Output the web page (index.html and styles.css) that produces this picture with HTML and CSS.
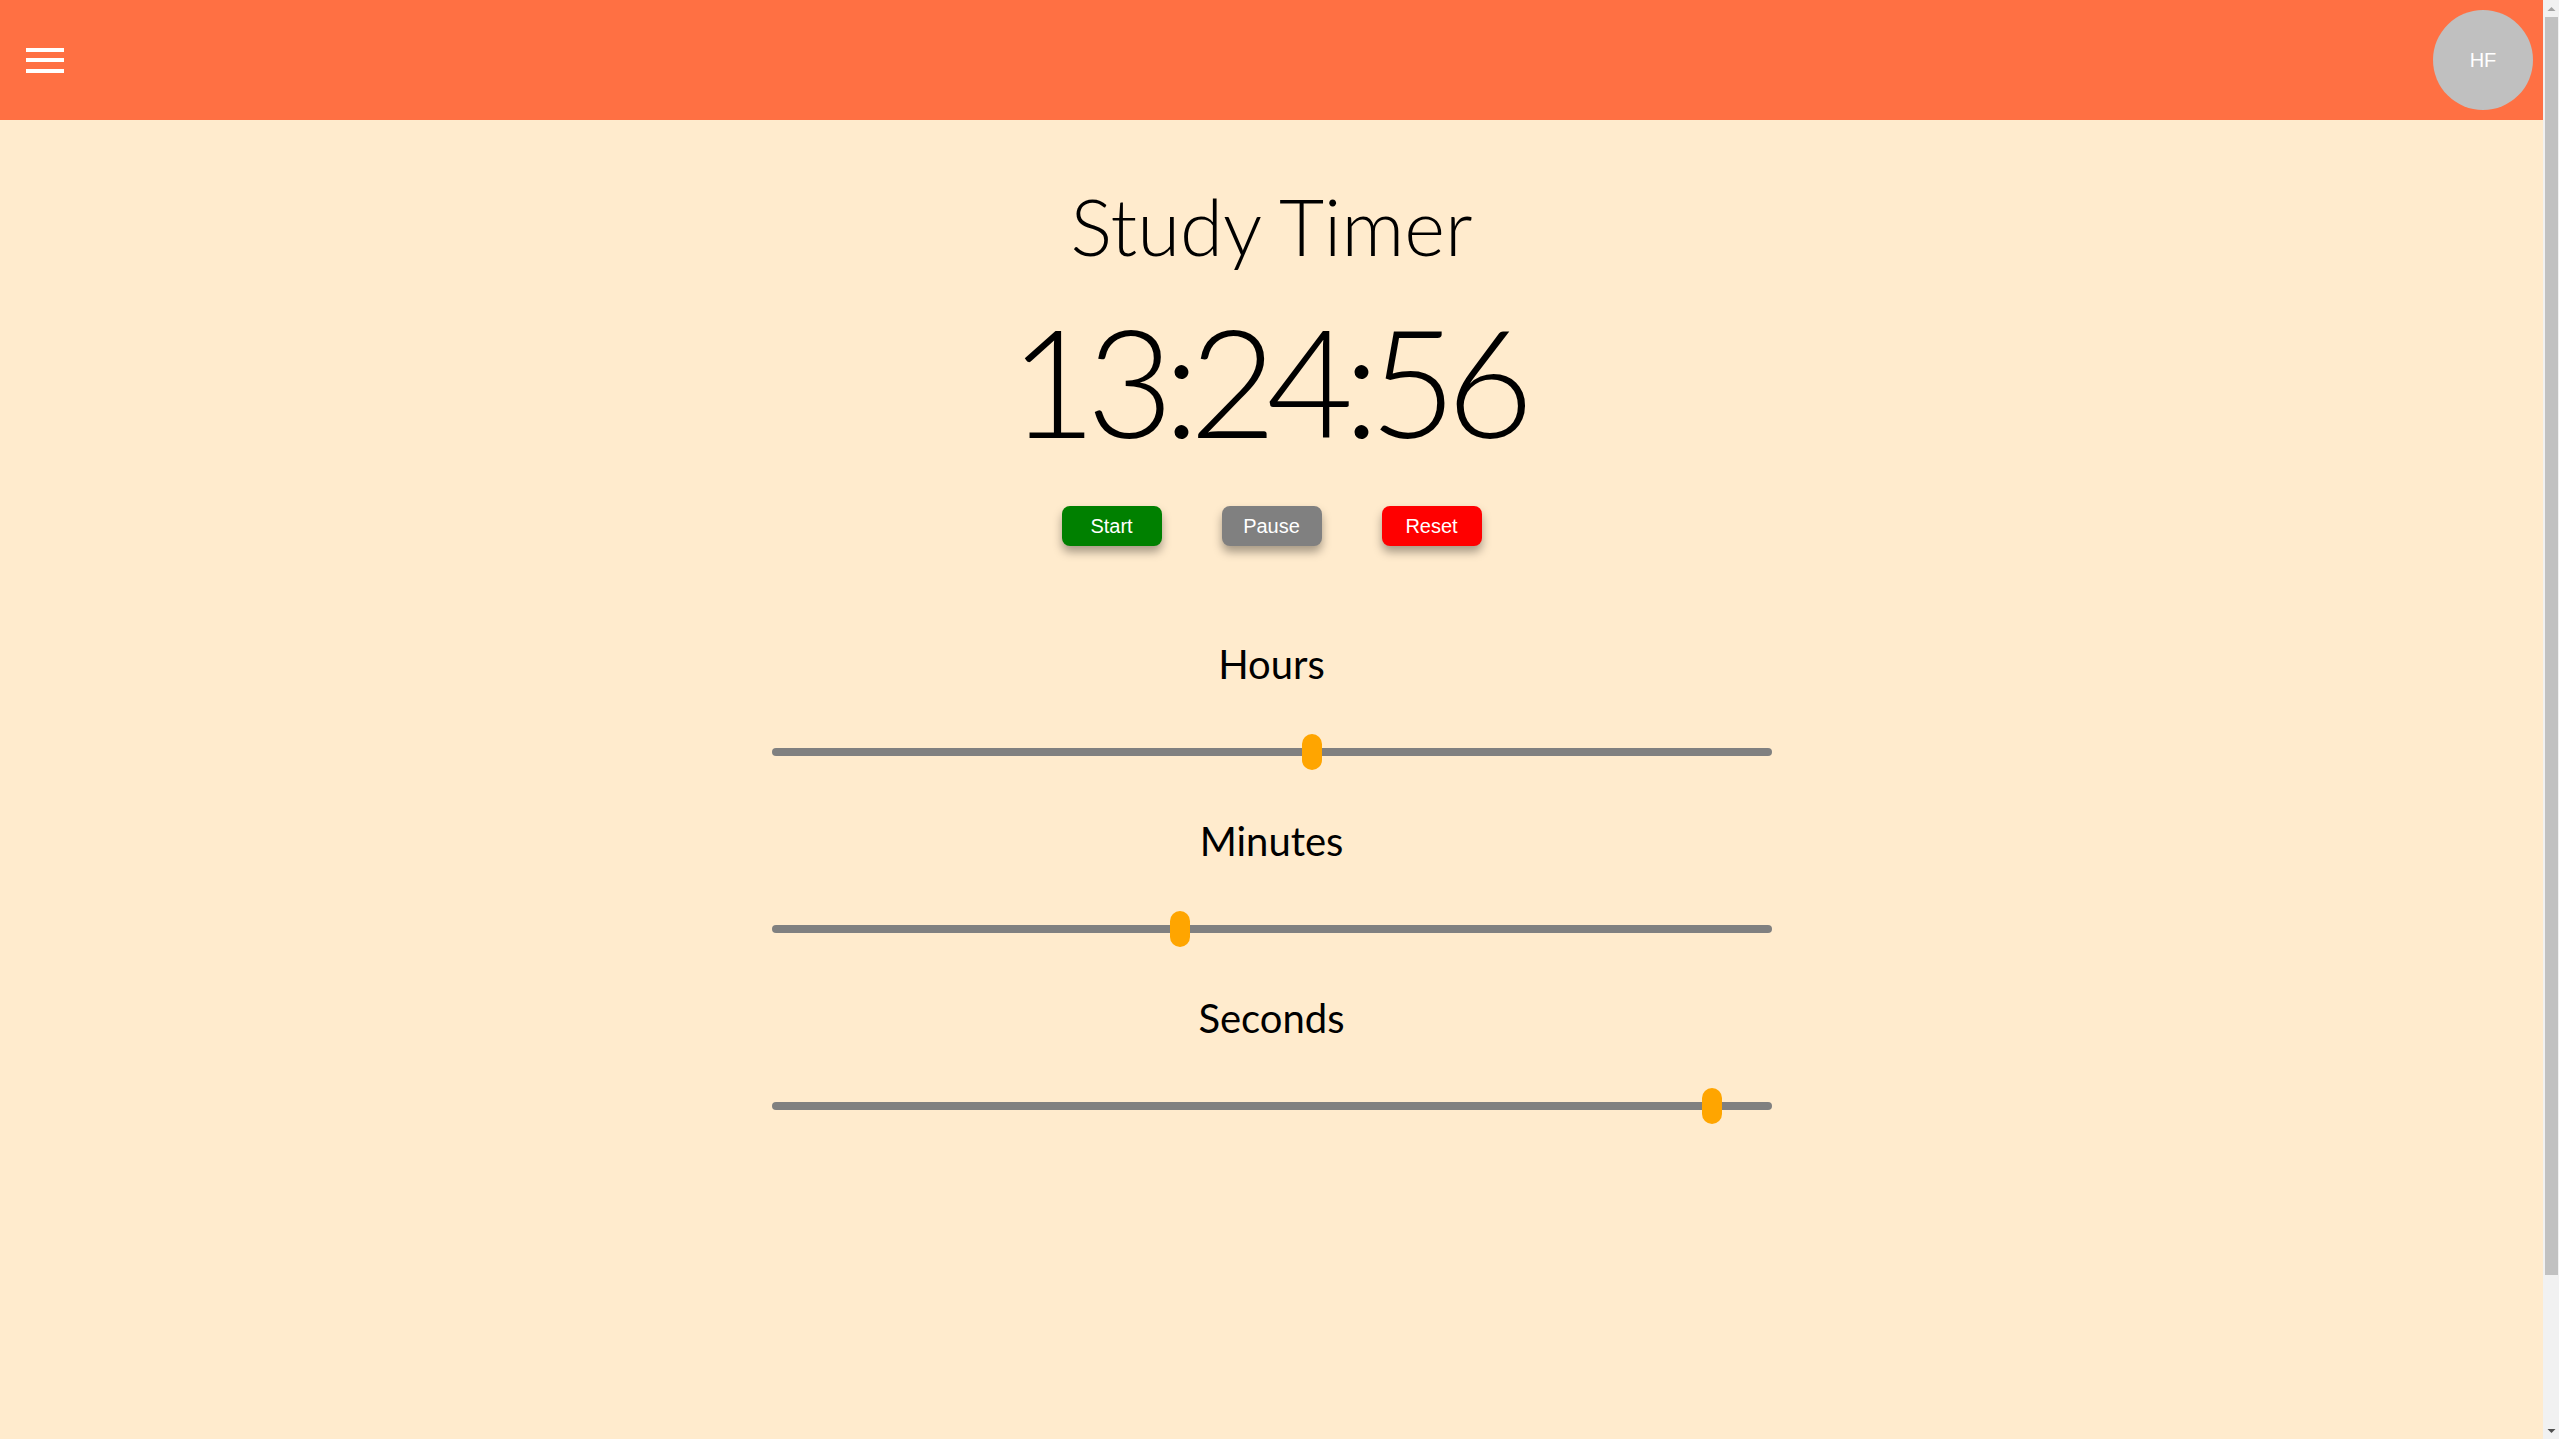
FILE: index.html
```html
<!DOCTYPE html>
<html lang="en">
<head>
<meta charset="utf-8">
<title>Study Timer</title>
<link rel="stylesheet" href="styles.css">
</head>
<body>
<div class="window">
  <div class="page">
    <header class="topbar">
      <button class="menu" aria-label="Menu">
        <span class="bar"></span>
        <span class="bar"></span>
        <span class="bar"></span>
      </button>
      <div class="avatar">HF</div>
    </header>
    <main class="main">
      <h1 class="title">Study Timer</h1>
      <div class="clock">13:24:56</div>
      <div class="controls">
        <button class="btn btn-start">Start</button>
        <button class="btn btn-pause">Pause</button>
        <button class="btn btn-reset">Reset</button>
      </div>
      <section class="group">
        <label class="label" for="hours">Hours</label>
        <input class="slider" id="hours" type="range" min="0" max="24" value="13">
      </section>
      <section class="group">
        <label class="label" for="minutes">Minutes</label>
        <input class="slider" id="minutes" type="range" min="0" max="59" value="24">
      </section>
      <section class="group">
        <label class="label" for="seconds">Seconds</label>
        <input class="slider" id="seconds" type="range" min="0" max="59" value="56">
      </section>
    </main>
  </div>
  <div class="scrollbar" aria-hidden="true">
    <div class="sb-btn">
      <svg width="16" height="17" viewBox="0 0 16 17"><polygon points="4.5,11 8.5,7 12.5,11" fill="#a3a3a3"/></svg>
    </div>
    <div class="sb-track">
      <div class="sb-thumb"></div>
    </div>
    <div class="sb-btn">
      <svg width="16" height="17" viewBox="0 0 16 17"><polygon points="4.5,7 12.5,7 8.5,11" fill="#505050"/></svg>
    </div>
  </div>
</div>
</body>
</html>
```
FILE: styles.css
```css
html, body {
  margin: 0;
  padding: 0;
}

body {
  background: #ffebcd;
  font-family: "Lato", "Liberation Sans", sans-serif;
  color: #000;
}

.window {
  display: flex;
  align-items: flex-start;
}

.page {
  flex: 1;
  min-width: 0;
  min-height: 1607px;
}

.scrollbar {
  width: 16px;
  height: 100vh;
  flex: none;
  display: flex;
  flex-direction: column;
  background: #f1f1f1;
}

.sb-btn {
  height: 17px;
  flex: none;
}

.sb-btn svg {
  display: block;
}

.sb-track {
  flex: 1;
}

.sb-thumb {
  height: 1258px;
  margin-left: 2px;
  width: 13px;
  background: #c1c1c1;
}

.topbar {
  height: 120px;
  background: #ff7043;
  display: flex;
  align-items: center;
  justify-content: space-between;
  padding: 0 10px 0 26px;
  box-sizing: border-box;
}

.menu {
  display: flex;
  flex-direction: column;
  gap: 6.5px;
  padding: 0;
  margin: 0;
  border: none;
  background: transparent;
}

.bar {
  display: block;
  width: 38px;
  height: 4px;
  background: #fff;
}

.avatar {
  width: 100px;
  height: 100px;
  border-radius: 50%;
  background: #c0c0c0;
  color: #fff;
  font-family: "Liberation Sans", Arial, sans-serif;
  font-size: 20px;
  display: flex;
  align-items: center;
  justify-content: center;
}

.main {
  display: flex;
  flex-direction: column;
  align-items: center;
  padding-top: 66px;
}

.title {
  margin: 0;
  font-family: "Lato", sans-serif;
  font-weight: 300;
  font-size: 78px;
  line-height: 80px;
}

.clock {
  margin-top: 39px;
  font-family: "Lato", sans-serif;
  font-weight: 300;
  font-size: 150px;
  line-height: 150px;
  letter-spacing: -10px;
  padding-right: 10px;
}

.controls {
  display: flex;
  gap: 60px;
  margin-top: 51px;
}

.btn {
  width: 100px;
  height: 40px;
  border: none;
  border-radius: 8px;
  color: #fff;
  font-family: "Liberation Sans", Arial, sans-serif;
  font-size: 20px;
  padding: 0;
  box-shadow: 0 6px 10px rgba(0, 0, 0, 0.35);
}

.btn-start { background: #008000; }
.btn-pause { background: #808080; }
.btn-reset { background: #ff0000; }

.group {
  display: flex;
  flex-direction: column;
  align-items: center;
  gap: 50px;
}

.group:first-of-type {
  margin-top: 98px;
}

.group + .group {
  margin-top: 51px;
}

.label {
  font-family: "Lato", sans-serif;
  font-weight: 400;
  font-size: 40px;
  line-height: 40px;
}

.slider {
  -webkit-appearance: none;
  appearance: none;
  display: block;
  width: 1000px;
  height: 36px;
  margin: 0;
  background: transparent;
}

.slider::-webkit-slider-runnable-track {
  height: 8px;
  background: #808080;
  border-radius: 4px;
}

.slider::-webkit-slider-thumb {
  -webkit-appearance: none;
  appearance: none;
  width: 20px;
  height: 36px;
  border-radius: 10px;
  background: #ffa500;
  margin-top: -14px;
}
```
